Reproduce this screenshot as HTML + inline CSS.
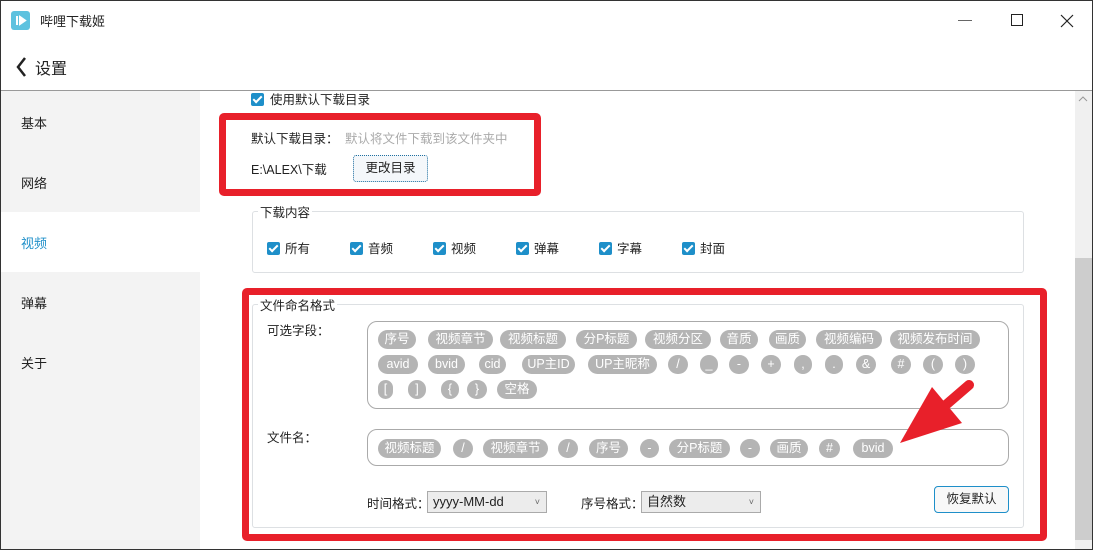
<!DOCTYPE html>
<html><head><meta charset="utf-8"><style>
*{margin:0;padding:0;box-sizing:border-box}
body{width:1093px;height:550px;overflow:hidden;background:#fff;font-family:"Liberation Sans","Noto Sans CJK SC",sans-serif;font-size:13px;color:#222;position:relative}
.a{position:absolute}
.t{position:absolute;height:19px;line-height:19px;border-radius:10px;background:#b4b4b4;color:#fff;text-align:center;font-size:12.5px;white-space:nowrap}
.cb{position:absolute;width:13px;height:13px;background:#1e8fc9;border-radius:2px}
.cb:after{content:"";position:absolute;left:4px;top:1px;width:3px;height:7px;border:solid #fff;border-width:0 2px 2px 0;transform:rotate(45deg)}
.lbl{position:absolute;font-size:12.5px}
</style></head><body>
<div class="a" style="inset:0;border:1px solid #333;z-index:9;pointer-events:none"></div>
<div class="a" style="left:11px;top:11px;width:19px;height:19px;background:#5ec2df;border-radius:3px"></div>
<svg class="a" style="left:11px;top:11px" width="19" height="19"><path d="M6 5v9M9 6l5 3.5-5 3.5z" stroke="#fff" fill="#fff" stroke-width="2"/></svg>
<div class="a" style="left:40px;top:11px;font-size:13px">哔哩下载姬</div>
<div class="a" style="left:958px;top:20px;width:14px;height:1px;background:#666"></div>
<div class="a" style="left:1011px;top:14px;width:12px;height:12px;border:1px solid #222"></div>
<svg class="a" style="left:1060px;top:14px" width="14" height="14"><path d="M1 1l12 12M13 1L1 13" stroke="#222" stroke-width="1.2"/></svg>
<svg class="a" style="left:15px;top:56px" width="12" height="22"><path d="M10 2L3 11l7 9" stroke="#222" stroke-width="2.5" fill="none"/></svg>
<div class="a" style="left:35px;top:55px;font-size:16px">设置</div>
<div class="a" style="left:0;top:90px;width:1093px;height:1px;background:#999"></div>
<div class="a" style="left:0;top:91px;width:200px;height:459px;background:#f3f3f3"></div>
<div class="a" style="left:0;top:212px;width:200px;height:60px;background:#fff"></div>
<div class="a" style="left:21px;top:113px">基本</div>
<div class="a" style="left:21px;top:173px">网络</div>
<div class="a" style="left:21px;top:233px;color:#1e8fc9">视频</div>
<div class="a" style="left:21px;top:293px">弹幕</div>
<div class="a" style="left:21px;top:353px">关于</div>
<div class="a" style="left:1075px;top:91px;width:17px;height:458px;background:#f0f0f0"></div>
<div class="a" style="left:1075px;top:258px;width:17px;height:282px;background:#cdcdcd"></div>
<svg class="a" style="left:1078px;top:95px" width="10" height="8"><path d="M1 6l4-4 4 4" stroke="#999" fill="none"/></svg>
<div class="cb" style="left:251px;top:93px"></div><div class="lbl" style="left:270px;top:89px">使用默认下载目录</div>
<div class="lbl" style="left:251px;top:128px">默认下载目录：</div>
<div class="lbl" style="left:345px;top:128px;color:#aaa">默认将文件下载到该文件夹中</div>
<div class="lbl" style="left:251px;top:159px">E:\ALEX\下载</div>
<div class="a" style="left:353px;top:155px;width:75px;height:27px;border:1px dotted #1e6fa0;border-radius:3px;background:#f4f7fa;text-align:center;line-height:25px;font-size:12.5px">更改目录</div>
<div class="a" style="left:219px;top:113px;width:322px;height:83px;border:7px solid #e8202a;border-radius:5px"></div>
<div class="a" style="left:252px;top:211px;width:772px;height:62px;border:1px solid #dde0e3;border-radius:3px"></div>
<div class="lbl" style="left:258px;top:202px;background:#fff;padding:0 2px">下载内容</div>
<div class="cb" style="left:267px;top:242px"></div><div class="lbl" style="left:285px;top:238px">所有</div>
<div class="cb" style="left:350px;top:242px"></div><div class="lbl" style="left:368px;top:238px">音频</div>
<div class="cb" style="left:433px;top:242px"></div><div class="lbl" style="left:451px;top:238px">视频</div>
<div class="cb" style="left:516px;top:242px"></div><div class="lbl" style="left:534px;top:238px">弹幕</div>
<div class="cb" style="left:599px;top:242px"></div><div class="lbl" style="left:617px;top:238px">字幕</div>
<div class="cb" style="left:682px;top:242px"></div><div class="lbl" style="left:700px;top:238px">封面</div>
<div class="a" style="left:252px;top:304px;width:772px;height:224px;border:1px solid #dde0e3;border-radius:3px"></div>
<div class="lbl" style="left:258px;top:295px;background:#fff;padding:0 2px">文件命名格式</div>
<div class="lbl" style="left:267px;top:320px">可选字段：</div>
<div class="a" style="left:367px;top:321px;width:642px;height:88px;border:1px solid #aaa;border-radius:10px"></div>
<div class="lbl" style="left:267px;top:427px">文件名：</div>
<div class="a" style="left:367px;top:429px;width:642px;height:37px;border:1px solid #aaa;border-radius:10px"></div>
<div class="t" style="left:378px;top:330px;width:38px">序号</div>
<div class="t" style="left:428px;top:330px;width:65px">视频章节</div>
<div class="t" style="left:500px;top:330px;width:66px">视频标题</div>
<div class="t" style="left:576px;top:330px;width:61px">分P标题</div>
<div class="t" style="left:645px;top:330px;width:66px">视频分区</div>
<div class="t" style="left:720px;top:330px;width:38px">音质</div>
<div class="t" style="left:769px;top:330px;width:37px">画质</div>
<div class="t" style="left:816px;top:330px;width:66px">视频编码</div>
<div class="t" style="left:890px;top:330px;width:90px">视频发布时间</div>
<div class="t" style="left:378px;top:355px;width:40px">avid</div>
<div class="t" style="left:428px;top:355px;width:37px">bvid</div>
<div class="t" style="left:479px;top:355px;width:27px">cid</div>
<div class="t" style="left:522px;top:355px;width:53px">UP主ID</div>
<div class="t" style="left:588px;top:355px;width:69px">UP主昵称</div>
<div class="t" style="left:668px;top:355px;width:20px">/</div>
<div class="t" style="left:700px;top:355px;width:18px">_</div>
<div class="t" style="left:729px;top:355px;width:20px">-</div>
<div class="t" style="left:761px;top:355px;width:20px">+</div>
<div class="t" style="left:794px;top:355px;width:18px">,</div>
<div class="t" style="left:825px;top:355px;width:18px">.</div>
<div class="t" style="left:856px;top:355px;width:20px">&amp;</div>
<div class="t" style="left:891px;top:355px;width:20px">#</div>
<div class="t" style="left:923px;top:355px;width:20px">(</div>
<div class="t" style="left:955px;top:355px;width:20px">)</div>
<div class="t" style="left:378px;top:380px;width:15px">[</div>
<div class="t" style="left:408px;top:380px;width:18px">]</div>
<div class="t" style="left:441px;top:380px;width:18px">{</div>
<div class="t" style="left:467px;top:380px;width:20px">}</div>
<div class="t" style="left:497px;top:380px;width:40px">空格</div>
<div class="t" style="left:378px;top:439px;width:63px">视频标题</div>
<div class="t" style="left:453px;top:439px;width:20px">/</div>
<div class="t" style="left:483px;top:439px;width:65px">视频章节</div>
<div class="t" style="left:558px;top:439px;width:20px">/</div>
<div class="t" style="left:589px;top:439px;width:39px">序号</div>
<div class="t" style="left:640px;top:439px;width:19px">-</div>
<div class="t" style="left:669px;top:439px;width:61px">分P标题</div>
<div class="t" style="left:740px;top:439px;width:20px">-</div>
<div class="t" style="left:770px;top:439px;width:38px">画质</div>
<div class="t" style="left:819px;top:439px;width:21px">#</div>
<div class="t" style="left:853px;top:439px;width:40px">bvid</div>
<div class="lbl" style="left:367px;top:493px">时间格式：</div>
<div class="a" style="left:427px;top:491px;width:120px;height:22px;border:1px solid #aaa;background:#ececec;padding-left:5px;line-height:20px">yyyy-MM-dd<span style="position:absolute;right:6px;font-size:9px;color:#666">˅</span></div>
<div class="lbl" style="left:581px;top:493px">序号格式：</div>
<div class="a" style="left:641px;top:491px;width:120px;height:22px;border:1px solid #aaa;background:#ececec;padding-left:5px;line-height:20px">自然数<span style="position:absolute;right:6px;font-size:9px;color:#666">˅</span></div>
<div class="a" style="left:934px;top:486px;width:75px;height:27px;border:1px solid #1e8fc9;border-radius:4px;background:#f8f8f8;text-align:center;line-height:25px;font-size:12.5px">恢复默认</div>
<div class="a" style="left:242px;top:288px;width:805px;height:253px;border:7px solid #e8202a;border-radius:5px"></div>
<svg class="a" style="left:0;top:0" width="1093" height="550"><path d="M969 385L940 410" stroke="#e8202a" stroke-width="10" stroke-linecap="round"/><path d="M900 443L932 387L962 423Z" fill="#e8202a"/></svg>
</body></html>
